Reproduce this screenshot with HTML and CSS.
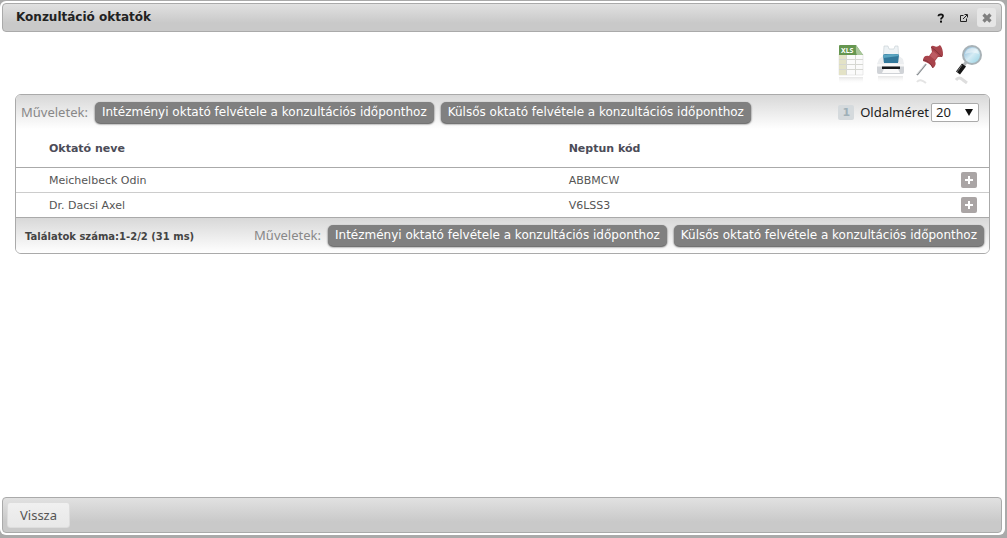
FILE: index.html
```html
<!DOCTYPE html>
<html lang="hu">
<head>
    <meta charset="UTF-8">
    <meta name="viewport" content="width=device-width, initial-scale=1.0">
    <title>Konzultáció oktatók</title>
    <link rel="stylesheet" href="styles.css">
</head>
<body>
    <div class="dialog">
        <header class="titlebar">
            <h1>Konzultáció oktatók</h1>
            <button type="button" class="title-btn" aria-label="Súgó">
                <svg width="10" height="12" viewBox="0 0 10 12"><path d="M2.5 4.2V3.6Q2.7 2.4 5 2.4Q7 2.500 7 4Q7 5 6 5.7Q5 6.2 5 7.600" fill="none" stroke="#111" stroke-width="1.800"/><rect x="4" y="8.6" width="2" height="2" fill="#111"/></svg>
            </button>
            <button type="button" class="title-btn" aria-label="Új ablak">
                <svg width="10" height="10" viewBox="0 0 10 10" fill="none" stroke="#222"><path d="M4.5 2.5H1.5V8.5H7.5V5.5M4 6L8 2M5.5 1.5H8.5V4.5"/></svg>
            </button>
            <button type="button" class="title-btn close" aria-label="Bezárás">
                <svg width="12" height="12" viewBox="0 0 12 12"><path d="M2.5 2.5L9.5 9.5M9.5 2.5L2.5 9.5" stroke="#808080" stroke-width="3.2"/></svg>
            </button>
        </header>

        <main class="content">
            <div class="tools">
                <button type="button" aria-label="Exportálás Excelbe">
                    <svg width="32" height="44" viewBox="0 0 32 44">
                        <defs><linearGradient id="fade" x1="0" y1="0" x2="0" y2="1"><stop offset="0" stop-color="#ccc" stop-opacity=".5"/><stop offset="1" stop-color="#fff" stop-opacity="0"/></linearGradient></defs>
                        <path d="M2 14H26V35H2Z" fill="#fbfbfb" stroke="#ddd" stroke-width=".6"/>
                        <path d="M2 14H9V35H2Z" fill="#e3e2c6"/>
                        <path d="M2 19.500H26M2 24.500H26M2 29.500H26M9.500 15V35M18.500 15V35" stroke="#d6d7d2"/>
                        <path d="M2 6Q2 5 3 5H19L26 15H2Z" fill="#669650"/>
                        <path d="M19 5L26 15H20Q18.500 13 19 5Z" fill="#a9c79b"/>
                        <text x="4" y="13" class="xls">XLS</text>
                        <path d="M2 37H26V44H2Z" fill="url(#fade)"/>
                    </svg>
                </button>
                <button type="button" aria-label="Nyomtatás">
                    <svg width="32" height="44" viewBox="0 0 32 44">
                        <path d="M8 6H12L13 9H18L19 6H22L23 22H7Z" fill="#edf2f5" stroke="#c4cdd2" stroke-width=".6"/>
                        <path d="M7 15Q8 14 10 14H20Q22 14 23 15L22 23H8Z" fill="#32789b"/>
                        <path d="M7.500 18L22.500 16L23 14.500Q16 13.500 7 15Z" fill="#5ba5c1"/>
                        <path d="M3 19L7 16V23H23V16L27 19L28 24V32Q28 34 26 34H3Q1 34 1 32V24Z" fill="#eceef0"/>
                        <path d="M1 24H28V32Q28 34 26 34H3Q1 34 1 32Z" fill="#d0d3d7"/>
                        <path d="M1 24H28V26.500H1Z" fill="#f8f8f8"/>
                        <path d="M6 26.500H24V29H6Z" fill="#15181b"/>
                        <path d="M8 29H22L24 33H6Z" fill="#fafafa"/>
                        <path d="M2 36H27V43H2Z" fill="url(#fade)"/>
                    </svg>
                </button>
                <button type="button" aria-label="Rögzítés">
                    <svg width="32" height="44" viewBox="0 0 32 44">
                        <path d="M11 24L2 35" stroke="#8a8f93" stroke-width="1.800"/>
                        <path d="M11 23L2 34" stroke="#eceeef" stroke-width=".8"/>
                        <path d="M16 7Q17 5 19 6Q22 8 25 5Q28 8 28 15Q28 17 26 17L23 17L20 21Q22 25 18 28Q15 23 8 21Q8 15 14 16L17 12Z" fill="#a8434b"/>
                        <path d="M18 11L23 15L20 20L15 16Z" fill="#bd5b63"/>
                        <path d="M16 7Q21 10 27 17M8 20Q14 20 18 28" fill="none" stroke="#84343c"/>
                        <path d="M2 42Q5 38 11 43" fill="none" stroke="#e4e4e4" stroke-width="2"/>
                    </svg>
                </button>
                <button type="button" aria-label="Keresés">
                    <svg width="32" height="44" viewBox="0 0 32 44">
                        <defs><linearGradient id="lens" x1="0" y1="0" x2="1" y2="1"><stop offset="0" stop-color="#78acd0"/><stop offset=".5" stop-color="#d5ebf4"/><stop offset="1" stop-color="#8ed0e3"/></linearGradient></defs>
                        <path d="M13 21L10 25" stroke="#b5b9bb" stroke-width="3"/>
                        <path d="M10 25L4 33" stroke="#151515" stroke-width="5"/>
                        <path d="M8 25L3 32" stroke="#777" stroke-width="1"/>
                        <circle cx="18" cy="15" r="9" fill="url(#lens)" stroke="#a8b2b7" stroke-width="2"/>
                        <path d="M11 14Q12 8 18 8Q24 8 25 14Q18 11 11 14Z" fill="#fff" opacity=".45"/>
                        <path d="M2 40Q5 36 9 40L13 43" fill="none" stroke="#dedede" stroke-width="3"/>
                    </svg>
                </button>
            </div>

            <section class="grid">
                <div class="grid-bar grid-top">
                    <span class="ops-label">Műveletek:</span>
                    <button type="button" class="op">Intézményi oktató felvétele a konzultációs időponthoz</button>
                    <button type="button" class="op">Külsős oktató felvétele a konzultációs időponthoz</button>
                    <div class="pager">
                        <span class="page">1</span>
                        <label for="pagesize">Oldalméret</label>
                        <span class="select-box">
                            <select id="pagesize">
                                <option>10</option>
                                <option selected>20</option>
                                <option>50</option>
                                <option>100</option>
                            </select>
                        </span>
                    </div>
                </div>
                <table>
                    <thead>
                        <tr><th class="name">Oktató neve</th><th>Neptun kód</th><th class="more"></th></tr>
                    </thead>
                    <tbody>
                        <tr>
                            <td class="name">Meichelbeck Odin</td>
                            <td>ABBMCW</td>
                            <td class="more"><button type="button" class="plus" aria-label="Lehetőségek"></button></td>
                        </tr>
                        <tr>
                            <td class="name">Dr. Dacsi Axel</td>
                            <td>V6LSS3</td>
                            <td class="more"><button type="button" class="plus" aria-label="Lehetőségek"></button></td>
                        </tr>
                    </tbody>
                </table>
                <div class="grid-bar grid-bottom">
                    <span class="count">Találatok száma:1-2/2 (31 ms)</span>
                    <span class="ops-label">Műveletek:</span>
                    <button type="button" class="op">Intézményi oktató felvétele a konzultációs időponthoz</button>
                    <button type="button" class="op">Külsős oktató felvétele a konzultációs időponthoz</button>
                </div>
            </section>
        </main>

        <footer class="footer">
            <button type="button" class="back">Vissza</button>
        </footer>
    </div>
</body>
</html>
```
FILE: styles.css
```css
* {
    box-sizing: border-box;
}
body {
    margin: 0;
    min-height: 100vh;
    padding: 1px 2px 3px 0;
    display: flex;
    background-color: #aaa;
    font-family: "Noto Sans", Tahoma, sans-serif;
    font-size: 13px;
    color: #333;
}
button {
    margin: 0;
    padding: 0;
    border: 0;
    background: none;
    font-family: inherit;
    cursor: pointer;
}
svg {
    display: block;
}
.dialog {
    flex: 1;
    display: flex;
    flex-direction: column;
    padding: 2px 3px 2px 2px;
    background-color: #fff;
    border-radius: 6px;
}

/* title bar */
.titlebar {
    display: flex;
    align-items: center;
    gap: 4px;
    height: 29px;
    padding: 0 5px 0 13px;
    border: 1px solid #aaa;
    border-radius: 4px;
    background: linear-gradient(#e1e1e1, #c9c9c9 70%);
}
.titlebar h1 {
    flex: 1;
    margin: 0;
    font: bold 12px/19px "DejaVu Sans", Tahoma, sans-serif;
    color: #222;
}
.title-btn {
    display: flex;
    align-items: center;
    justify-content: center;
    width: 19px;
    height: 19px;
}
.title-btn.close {
    background-color: #e6e6e6;
    border-radius: 3px;
}

.content {
    flex: 1;
    padding: 8px 12px 0 13px;
}
.tools {
    display: flex;
    justify-content: flex-end;
    gap: 7px;
    padding-right: 4px;
    margin-bottom: 10px;
}
.xls {
    font: bold 7px "Noto Sans", sans-serif;
    fill: #fff;
}

/* grid */
.grid {
    border: 1px solid #aaa;
    border-radius: 6px;
    overflow: hidden;
}
.grid-bar {
    display: flex;
    align-items: center;
    height: 35px;
    padding: 0 5px;
    background: linear-gradient(#d8d8d8, #fff);
}
.grid-top {
    height: 34px;
}
.ops-label {
    margin-right: 7px;
    line-height: 19px;
    color: #888;
}
.op {
    height: 21px;
    padding: 0 7px;
    border-radius: 5px;
    background-color: #808080;
    box-shadow: 0 1px 2px #444;
    font: 12px/19px "DejaVu Sans", Tahoma, sans-serif;
    color: #fff;
    white-space: nowrap;
}
.op + .op {
    margin-left: 7px;
}
.pager {
    display: flex;
    align-items: center;
    margin-left: auto;
    padding-right: 5px;
    line-height: 19px;
    color: #222;
}
.page {
    width: 16px;
    height: 15px;
    margin-right: 6px;
    background-color: #d5dadd;
    border-radius: 2px;
    font: bold 11px/15px "DejaVu Sans", sans-serif;
    text-align: center;
    color: #9fb0b8;
}
.select-box {
    position: relative;
    margin-left: 2px;
}
.select-box::after {
    content: "";
    position: absolute;
    top: 6px;
    right: 6px;
    border: 4px solid transparent;
    border-top: 7px solid #111;
    border-bottom: 0;
    pointer-events: none;
}
select {
    display: block;
    appearance: none;
    width: 48px;
    height: 19px;
    padding: 0 4px;
    border: 1px solid #aaa;
    border-radius: 2px;
    background-color: #fff;
    font: 13px/17px "Noto Sans", sans-serif;
    color: #222;
}
table {
    width: 100%;
    border-collapse: collapse;
    table-layout: fixed;
    font: 11px/14px "DejaVu Sans", Verdana, sans-serif;
    color: #555;
}
th, td {
    height: 25px;
    padding: 2px 0 0;
    text-align: left;
    border-bottom: 1px solid #ccc;
}
th {
    height: 38px;
    color: #4c4c58;
    border-color: #aaa;
}
.name {
    width: 56.8%;
    padding-left: 33px;
}
.more {
    width: 50px;
    padding: 0 12px 0 0;
}
.plus {
    display: block;
    width: 16px;
    height: 16px;
    margin-left: auto;
    border-radius: 2px;
    background:
        linear-gradient(#fff, #fff) center / 8px 2px no-repeat,
        linear-gradient(#fff, #fff) center / 2px 8px no-repeat,
        #aaa5a5;
}
tbody tr:last-child td {
    border-color: #aaa;
}
.count {
    flex: 1;
    padding: 4px 0 0 4px;
    font: bold 10px/14px "DejaVu Sans", Verdana, sans-serif;
    color: #444;
}

/* footer */
.footer {
    display: flex;
    align-items: center;
    height: 36px;
    padding: 0 4px;
    border: 1px solid #aaa;
    border-radius: 4px;
    background: linear-gradient(#e1e1e1, #c9c9c9 70%);
}
.back {
    height: 26px;
    padding: 0 12px;
    border: 1px solid #ddd;
    border-radius: 3px;
    background: linear-gradient(#f0f0f0, #e8e8e8);
    font-size: 13px;
    line-height: 22px;
    color: #555;
}
```
